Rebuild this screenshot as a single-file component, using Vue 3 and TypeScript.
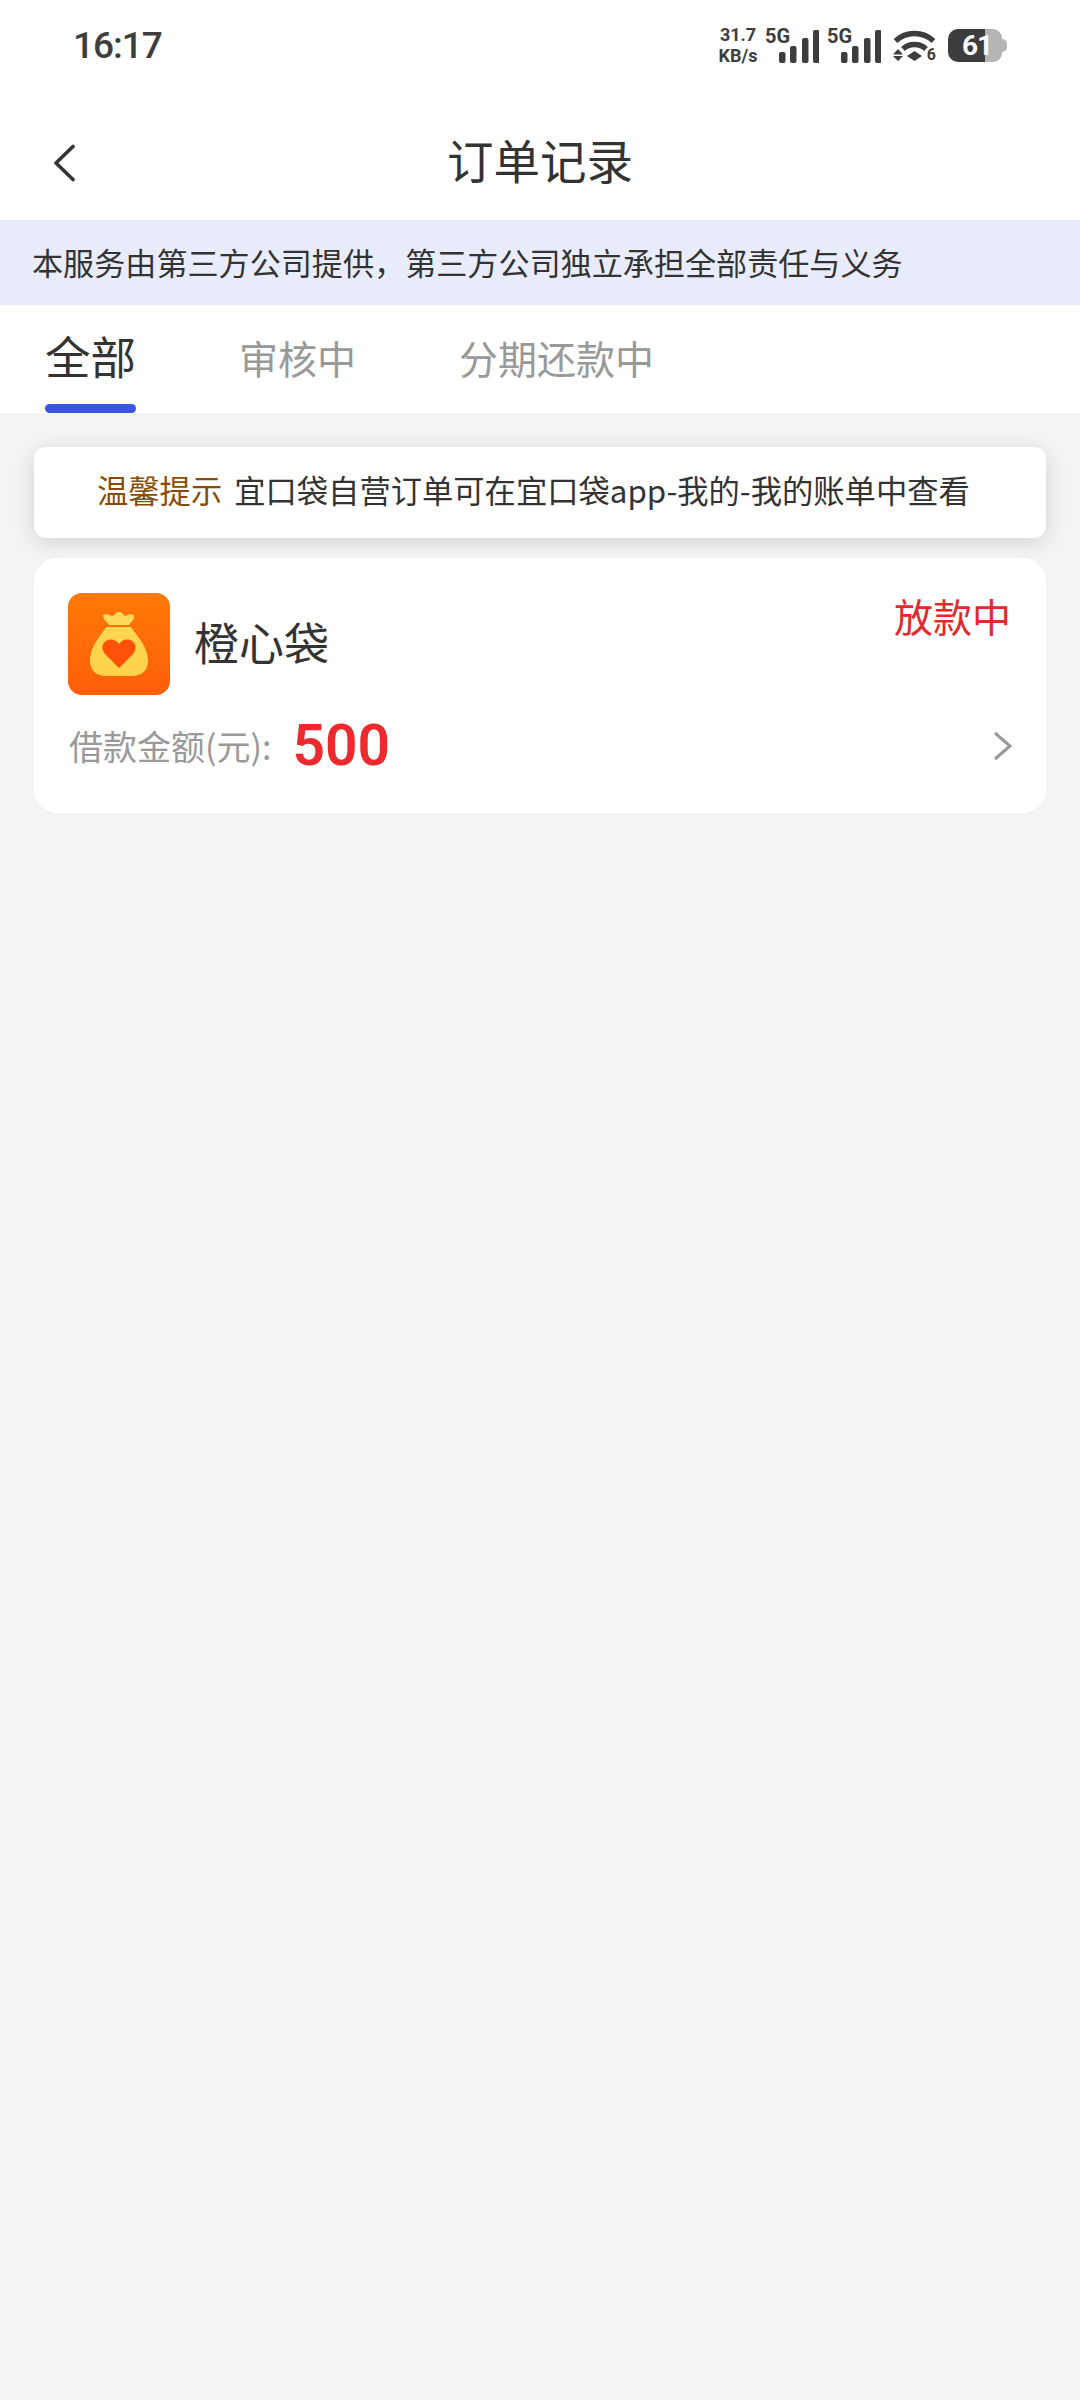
<script setup lang="ts">
const tabs = ['全部', '审核中', '分期还款中']
const bars = [
  { x: 0, y: 24, h: 11 },
  { x: 11, y: 18, h: 17 },
  { x: 23, y: 10, h: 25 },
  { x: 34, y: 2, h: 33 },
]
</script>

<template>
  <div class="page">
    <header class="top">
      <div class="status">
        <span class="time">16:17</span>
        <div class="status-right">
          <div class="speed">
            <span>31.7</span>
            <span>KB/s</span>
          </div>
          <div v-for="n in 2" :key="n" class="signal">
            <span class="net">5G</span>
            <svg class="bars" width="40" height="35" viewBox="0 0 40 35" fill="#3d3d3d">
              <rect v-for="b in bars" :key="b.x" :x="b.x" :y="b.y" width="6.5" :height="b.h" rx="2" />
            </svg>
          </div>
          <div class="wifi">
            <svg width="43" height="31" viewBox="0 0 43 31" fill="none" stroke="#3d3d3d" stroke-width="5.5">
              <path d="M2.5 11C13 1 30 1 40.5 11" />
              <path d="M10 19C16 13 27 13 33 19" />
              <path d="M21.5 21L29 26L21.5 31L14 26Z" fill="#3d3d3d" stroke="none" />
              <path d="M5 19L10 24.5H0Z M5 31L10 26H0Z" fill="#3d3d3d" stroke="none" />
            </svg>
            <span class="wifi-num">6</span>
          </div>
          <div class="battery">
            <div class="batt-fill" />
            <div class="batt-rest" />
            <div class="batt-nub" />
            <span class="batt-num">61</span>
          </div>
        </div>
      </div>
      <div class="nav">
        <svg class="back" width="24" height="38" viewBox="0 0 24 38" fill="none" stroke="#333" stroke-width="3.6" stroke-linecap="round" stroke-linejoin="round">
          <path d="M21 2.5L4 19L21 35.5" />
        </svg>
        <div class="title">订单记录</div>
      </div>
    </header>

    <div class="banner">本服务由第三方公司提供，第三方公司独立承担全部责任与义务</div>

    <nav class="tabs">
      <div v-for="(t, i) in tabs" :key="t" class="tab" :class="{ active: i === 0 }">{{ t }}</div>
    </nav>

    <main class="content">
      <div class="notice">
        <span class="notice-label">温馨提示</span>
        <span class="notice-text">宜口袋自营订单可在宜口袋app-我的-我的账单中查看</span>
      </div>

      <div class="card">
        <div class="card-top">
          <div class="logo">
            <svg width="102" height="102" viewBox="0 0 102 102">
              <defs>
                <linearGradient id="bag" x1="0" y1="0" x2="0" y2="1">
                  <stop offset="0" stop-color="#ffd84f" />
                  <stop offset="1" stop-color="#ffd24a" />
                </linearGradient>
              </defs>
              <path d="M35 22C39 20 42 23 45 23C47 21 49 19 51 19C53 19 55 21 57 23C60 22 63 20 66 22C67 26 63 29 61 32H41C39 29 35 26 35 22Z" fill="#ffd95a" />
              <path d="M38 34H63C66 40 80 52 80 68C80 78 73 83 64 83H38C29 83 22 78 22 68C22 52 35 40 38 34Z" fill="url(#bag)" />
              <path d="M51 75L37 61C33 56 34 50 38 48C43 45 48 47 51 51C54 47 59 45 64 48C68 50 69 56 65 61Z" fill="#ff5208" />
            </svg>
          </div>
          <div class="name">橙心袋</div>
          <div class="state">放款中</div>
        </div>
        <div class="card-bottom">
          <span class="amount-label">借款金额(元):</span>
          <span class="amount">500</span>
          <svg class="more" width="20" height="30" viewBox="0 0 20 30" fill="none" stroke="#999" stroke-width="3">
            <path d="M2 2L17 15L2 28" />
          </svg>
        </div>
      </div>
    </main>
  </div>
</template>

<style scoped>
.page { width: 1080px; height: 2400px; background: #f4f4f4; color: #333; font-family: "Noto Sans CJK SC", "Noto Sans", sans-serif; display: flex; flex-direction: column; overflow: hidden; }
.top { background: #fff; }
.status { height: 106px; box-sizing: border-box; padding: 0 72px 16px 73px; display: flex; align-items: center; justify-content: space-between; }
.time { font-family: Roboto, sans-serif; font-weight: 500; font-size: 37px; line-height: 1; color: #3d3d3d; letter-spacing: -1px; }
.status-right { display: flex; align-items: center; }
.speed { display: flex; flex-direction: column; align-items: center; width: 44px; margin-right: 5px; font-family: Roboto, sans-serif; font-weight: 700; font-size: 18px; line-height: 21px; color: #3d3d3d; white-space: nowrap; }
.signal { position: relative; width: 54px; height: 35px; margin-right: 8px; display: flex; justify-content: flex-end; }
.net { position: absolute; left: 0; top: -1px; font-family: Roboto, sans-serif; font-weight: 700; font-size: 20px; line-height: 18px; color: #3d3d3d; }
.wifi { position: relative; width: 43px; height: 31px; margin-left: 4px; margin-right: 12px; }
.wifi svg { display: block; }
.wifi-num { position: absolute; right: 0; bottom: -1px; font-family: Roboto, sans-serif; font-weight: 700; font-size: 16px; line-height: 14px; color: #3d3d3d; }
.battery { position: relative; display: flex; align-items: center; width: 60px; height: 33px; }
.batt-fill { width: 37px; height: 33px; background: #3d3d3d; border-radius: 10px 0 0 10px; }
.batt-rest { width: 17px; height: 33px; background: #b5b5b5; border-radius: 0 9px 9px 0; }
.batt-nub { width: 5px; height: 13px; background: #b5b5b5; border-radius: 0 5px 5px 0; }
.batt-num { position: absolute; left: 14px; top: 0; font-family: Roboto, sans-serif; font-weight: 700; font-size: 28px; line-height: 33px; color: #fff; letter-spacing: -1px; }
.nav { height: 114px; position: relative; display: flex; align-items: center; justify-content: center; padding-bottom: 8px; box-sizing: border-box; }
.back { position: absolute; left: 52px; top: 38px; }
.title { font-size: 46.5px; line-height: 60px; color: #333; }
.banner { height: 85px; background: #e9ecfc; padding-left: 32px; font-size: 31.1px; line-height: 83px; color: #333; white-space: nowrap; }
.tabs { height: 108px; background: #fff; display: flex; gap: 103px; padding-left: 45px; }
.tab { position: relative; height: 108px; line-height: 104px; font-size: 39px; color: #999; }
.tab.active { font-size: 45.5px; color: #333; line-height: 100px; }
.tab.active::after { content: ""; position: absolute; left: 0; right: 0; bottom: 0; height: 9px; background: #3a55e0; border-radius: 5px; }
.content { padding: 34px 34px 0; display: flex; flex-direction: column; gap: 20px; }
.notice { height: 91px; box-sizing: border-box; background: #fff; border-radius: 12px; box-shadow: 0 4px 22px rgba(0, 0, 0, 0.14); display: flex; align-items: center; gap: 12px; font-size: 31.3px; line-height: 40px; padding: 0 0 6px 63px; white-space: nowrap; }
.notice-label { color: #8a4b08; }
.notice-text { color: #333; }
.card { height: 255px; box-sizing: border-box; background: #fff; border-radius: 24px; padding: 35px 34px 0 34px; }
.card-top { display: flex; align-items: flex-start; }
.logo { width: 102px; height: 102px; border-radius: 14px; background: linear-gradient(180deg, #ff7a06, #ff5e0a); flex-shrink: 0; }
.logo svg { display: block; }
.name { margin-left: 24px; margin-top: 20px; font-size: 45px; line-height: 58px; color: #333; }
.state { margin-left: auto; margin-right: 1px; margin-top: -4px; font-size: 39px; line-height: 52px; color: #e2292e; }
.card-bottom { display: flex; align-items: center; margin-top: 20px; height: 62px; padding-left: 1px; }
.amount-label { font-size: 34px; line-height: 48px; color: #999; }
.amount { margin-left: 21px; font-family: Roboto, sans-serif; font-weight: 600; font-size: 57px; line-height: 62px; color: #ee2a2e; }
.more { margin-left: auto; margin-right: -1px; }
</style>
